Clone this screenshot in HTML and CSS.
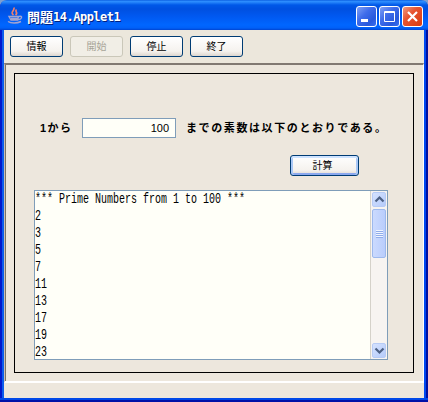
FILE: index.html
```html
<!DOCTYPE html>
<html lang="ja">
<head>
<meta charset="utf-8">
<title>問題14.Applet1</title>
<link rel="stylesheet" href="styles.css">
</head>
<body>
<div class="window">
  <header class="titlebar">
    <svg class="java" width="16" height="17" viewBox="0 0 16 17" fill="none">
      <path d="M6.500 8C2.500 5 8 4 7 .5M8.500 8C12 5 7 5 9.500 2.500" stroke="#f0806c" stroke-width="1.700"/>
      <path d="M2 9.500H11.500L10.500 13H4ZM12 9.500C16 8 15 13 11 12.500M4 11.500H11M1 14.500C4 16.500 10 16.500 14 14.500" stroke="#a4a4d0" stroke-width="1.400"/>
    </svg>
    <h1 class="title"><span class="title-jp">問題</span>14.Applet1</h1>
    <div class="controls">
      <span class="control"><svg width="19" height="19"><path d="M4 12h7v3H4z" fill="#fff"/></svg></span>
      <span class="control"><svg width="19" height="19" fill="none"><path d="M4.500 4.500h10v10h-10zM4 5.500h11" stroke="#fff"/></svg></span>
      <span class="control close"><svg width="19" height="19" fill="none"><path d="M5 5l9 9M14 5l-9 9" stroke="#fff" stroke-width="2.200"/></svg></span>
    </div>
  </header>
  <nav class="toolbar">
    <button class="btn">情報</button>
    <button class="btn" disabled>開始</button>
    <button class="btn">停止</button>
    <button class="btn">終了</button>
  </nav>
  <main class="applet">
    <section class="panel">
      <div class="range">
        <span class="from">1から</span>
        <span class="field">100</span>
        <span class="message">までの素数は以下のとおりである。</span>
      </div>
      <div class="actions"><button class="btn calc">計算</button></div>
      <div class="output">
        <pre class="text">*** Prime Numbers from 1 to 100 ***
2
3
5
7
11
13
17
19
23</pre>
        <div class="scrollbar">
          <span class="arrow"><svg width="13" height="13" fill="none"><path d="M2.500 8.500l4-4 4 4" stroke="#4d6185" stroke-width="2.200"/></svg></span>
          <span class="thumb"><i class="grip"></i></span>
          <span class="arrow down"><svg width="13" height="13" fill="none"><path d="M2.500 4.500l4 4 4-4" stroke="#4d6185" stroke-width="2.200"/></svg></span>
        </div>
      </div>
    </section>
  </main>
  <footer class="status"></footer>
</div>
</body>
</html>
```
FILE: styles.css
```css
* { box-sizing: border-box; }
body { margin: 0; background: #7d9fd0; font-family: "Liberation Sans", "Noto Sans CJK JP", sans-serif; }
.window {
  width: 428px; height: 402px; overflow: hidden;
  display: flex; flex-direction: column;
  padding: 0 4px 4px;
  border-radius: 7px 7px 0 0;
  background: linear-gradient(transparent 398px, #0048e8 398px 400px, #0010a8 400px),
    linear-gradient(90deg, #0018cc 0 2px, #0c5cec 2px 4px, transparent 4px calc(100% - 4px), #0048f0 calc(100% - 4px) calc(100% - 2px), #0010a0 calc(100% - 2px));
}
.titlebar {
  flex: none; height: 30px; margin: 0 -4px; padding: 0 5px 0 7px;
  display: flex; align-items: center;
  background: linear-gradient(#0050d8 0, #3090ff 1px, #2888fc 2px, #0058e8 5px, #0050e0 9px, #0058f0 16px, #0066ff 25px, #0060f8 28px, #0044d0 30px);
}
.java { flex: none; margin-top: 1px; }
.title {
  margin: 3px 0 0 4px; display: flex; align-items: center;
  font: bold 12px/16px "DejaVu Sans Mono", monospace; letter-spacing: -.5px;
  color: #fff; text-shadow: 1px 1px 0 #002080;
}
.title-jp { font: bold 13px/16px "Noto Sans CJK JP", sans-serif; letter-spacing: 0; }
.controls { margin: 3px 0 0 auto; display: flex; gap: 2px; }
.control {
  width: 21px; height: 21px; border: 1px solid #fff; border-radius: 3px;
  background: linear-gradient(135deg, #7fa0f5, #3f6cea 40%, #2858dc 75%, #3870f0);
}
.control svg { display: block; }
.close { background: linear-gradient(135deg, #f09a80, #e65330 40%, #d83c10); }
.toolbar {
  flex: none; height: 33px; padding: 6px 6px 0; display: flex; gap: 7px;
  align-items: flex-start; background: #ece7dc;
}
.btn {
  width: 53px; height: 21px; padding: 0 0 1px; border: 1px solid #003c74; border-radius: 3px;
  background: linear-gradient(#fff, #f5f2ee 75%, #ddd6cf);
  font: 10px/18px "Noto Sans CJK JP", sans-serif; color: #000; text-align: center;
}
.btn:disabled { color: #a8a598; border-color: #cac7b9; background: #f1eee6; }
.applet {
  flex: none; height: 320px; padding: 8px 9px 0;
  background: #ede7dd; border-left: 1px solid #c8c0b4; border-top: 2px solid #817972;
  border-bottom: 2px solid #fff; border-right: 1px solid #fff;
  box-shadow: inset 1px 0 #77716a;
}
.panel { width: 400px; height: 300px; border: 1px solid #000; padding: 44px 0 0 19px; }
.range { display: flex; height: 20px; align-items: center; white-space: nowrap; }
.from { width: 48px; padding-left: 6px; font: bold 11px/20px "Liberation Sans", "Noto Sans CJK JP", sans-serif; letter-spacing: 1.500px; }
.field {
  width: 94px; height: 20px; padding: 0 6px 0 0; text-align: right;
  border: 1px solid #7f9db9; background: #fffff8; font: 11px/19px "Liberation Sans", sans-serif;
}
.message { margin: -3px 0 0 10px; font: bold 11px/20px "Noto Sans CJK JP", sans-serif; letter-spacing: 1.600px; }
.actions { height: 21px; margin-top: 17px; padding-left: 256px; }
.calc { display: block; width: 69px; padding-right: 4px; box-shadow: inset 0 2px #cee3ff, inset 2px 0 #aac8f6, inset -2px 0 #aac8f6, inset 0 -2px #8ba8ee; }
.output {
  width: 354px; height: 170px; margin-top: 14px; display: flex; justify-content: space-between;
  border: 1px solid #7f9db9; background: #fffff8; overflow: hidden;
}
.text {
  margin: 0; width: 330px; font: 14px/17px "Liberation Mono", monospace;
  transform: scaleX(.714); transform-origin: 0 0; color: #000;
}
.scrollbar {
  width: 17px; flex: none; padding: 1px; display: flex; flex-direction: column;
  background: #f7f4f1; border-left: 1px solid #d5d2ca;
}
.arrow { height: 15px; border: 1px solid #b7cbf5; border-radius: 2px; background: linear-gradient(135deg, #d5e2ff, #b5cbfa); }
.arrow svg { display: block; }
.thumb {
  height: 49px; margin-top: 2px; border: 1px solid #9db9ed; border-radius: 2px;
  background: linear-gradient(90deg, #cbdafe, #b9cdfc); display: flex; align-items: center; justify-content: center;
}
.grip { width: 7px; height: 8px; background: repeating-linear-gradient(#f0f5ff 0 1px, #90acea 1px 2px); }
.down { margin-top: auto; }
.status { flex: 1; background: #ede7dd; }
```
